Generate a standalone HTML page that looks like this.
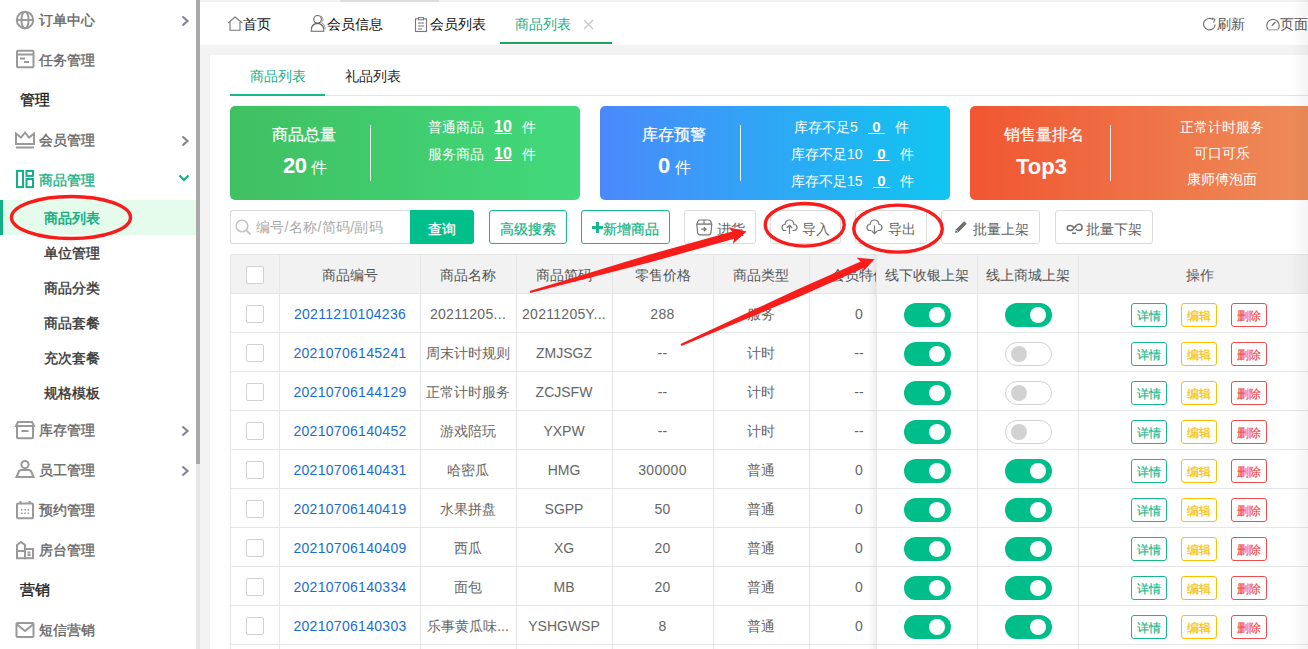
<!DOCTYPE html>
<html><head><meta charset="utf-8">
<style>
*{box-sizing:border-box;margin:0;padding:0}
html,body{width:1308px;height:649px;overflow:hidden;white-space:nowrap;background:#f3f3f3;font-family:"Liberation Sans",sans-serif;font-size:14px;color:#333}
.abs{position:absolute}
#side{position:absolute;left:0;top:0;width:196px;height:649px;background:#fff}
.mi{position:absolute;left:0;width:196px;height:40px;line-height:40px;font-size:14px;color:#666;-webkit-text-stroke:0.35px currentColor}
.mi .ic{position:absolute;left:15px;top:11px;width:20px;height:18px;overflow:visible}
.mi .tx{position:absolute;left:39px;top:0}
.mi .chev{position:absolute;left:179px;top:15px;width:12px;height:12px}
.hd{position:absolute;left:20px;height:40px;line-height:40px;font-size:15px;color:#222;-webkit-text-stroke:0.4px currentColor}
.sub{position:absolute;left:0;width:196px;height:35px;line-height:35px;font-size:14px;color:#333;-webkit-text-stroke:0.35px currentColor}
.sub .tx{position:absolute;left:44px;top:1px}
#sb{position:absolute;left:196px;top:0;width:4px;height:649px;background:#e6e6e6}
#sbt{position:absolute;left:196px;top:0;width:4px;height:464px;background:#a9a9a9}
#topbar{position:absolute;left:200px;top:2px;width:1108px;height:43px;background:#fff}
.tab{position:absolute;top:1px;height:43px;line-height:43px;font-size:14px;color:#111}
#card{position:absolute;left:210px;top:55px;width:1098px;height:600px;background:#fff}
.stat{position:absolute;top:106px;height:94px;border-radius:5px;color:#fff}
.btn{position:absolute;top:210px;height:34px;border:1px solid #dcdcdc;border-radius:3px;background:#fff;font-size:14px;color:#666;line-height:36px}
.gbtn{border-color:#17b98a;color:#12b282;-webkit-text-stroke:0.2px #12b282}
table{border-collapse:collapse}
.th{position:absolute;top:254px;height:39px;background:#f2f2f2;border-top:1px solid #e4e4e4}
.cell{position:absolute;text-align:center;font-size:14px;color:#666;line-height:39px;white-space:nowrap;overflow:hidden}
</style></head><body>

<!-- sidebar -->
<div id="side">
  <div class="mi" style="top:0">
    <svg class="ic" viewBox="0 0 20 18"><g fill="none" stroke="#999" stroke-width="2"><circle cx="10" cy="9" r="8.2"/><ellipse cx="10" cy="9" rx="3.6" ry="8.2"/><line x1="2" y1="9" x2="18" y2="9"/></g></svg>
    <span class="tx">订单中心</span>
    <svg class="chev" viewBox="0 0 12 12"><path d="M3.5 1.5 L8.5 6 L3.5 10.5" fill="none" stroke="#858596" stroke-width="2.2"/></svg>
  </div>
  <div class="mi" style="top:40px">
    <svg class="ic" viewBox="0 1 20 18"><g fill="none" stroke="#999" stroke-width="2"><rect x="2" y="0.8" width="16.5" height="16.5" rx="1"/><line x1="2" y1="4.5" x2="18.5" y2="4.5"/><line x1="5" y1="8.5" x2="10" y2="8.5"/><line x1="9" y1="12" x2="14" y2="12"/></g></svg>
    <span class="tx">任务管理</span>
  </div>
  <div class="hd" style="top:80px">管理</div>
  <div class="mi" style="top:120px">
    <svg class="ic" viewBox="0 0 20 18"><g fill="none" stroke="#999" stroke-width="2"><path d="M1 13 L1 2.5 L6 6.5 L10 1.5 L14 6.5 L19 2.5 L19 13 Z"/><line x1="1" y1="16.5" x2="19" y2="16.5"/></g></svg>
    <span class="tx">会员管理</span>
    <svg class="chev" viewBox="0 0 12 12"><path d="M3.5 1.5 L8.5 6 L3.5 10.5" fill="none" stroke="#858596" stroke-width="2.2"/></svg>
  </div>
  <div class="mi" style="top:160px;color:#13b184">
    <svg class="ic" viewBox="0 1 20 18"><g fill="none" stroke="#13b184" stroke-width="2"><rect x="2" y="0.9" width="6" height="16.2"/><rect x="11.5" y="0.9" width="6.5" height="5"/><rect x="11.5" y="9" width="6.5" height="8.1"/></g></svg>
    <span class="tx">商品管理</span>
    <svg class="chev" style="left:178px;top:12px" viewBox="0 0 12 12"><path d="M1.5 3.5 L6 8 L10.5 3.5" fill="none" stroke="#13b184" stroke-width="2.2"/></svg>
  </div>
  <div class="abs" style="left:0;top:200px;width:196px;height:35px;background:#e5fbeb"></div>
  <div class="abs" style="left:0;top:200px;width:3px;height:35px;background:#13b184"></div>
  <div class="sub" style="top:200px;color:#0caf7e;-webkit-text-stroke:0.5px #0caf7e"><span class="tx">商品列表</span></div>
  <div class="sub" style="top:235px"><span class="tx">单位管理</span></div>
  <div class="sub" style="top:270px"><span class="tx">商品分类</span></div>
  <div class="sub" style="top:305px"><span class="tx">商品套餐</span></div>
  <div class="sub" style="top:340px"><span class="tx">充次套餐</span></div>
  <div class="sub" style="top:375px"><span class="tx">规格模板</span></div>
  <div class="mi" style="top:410px">
    <svg class="ic" viewBox="0 0 20 18"><g fill="none" stroke="#999" stroke-width="2"><path d="M3 1 L17 1 L19 5 L1 5 Z"/><rect x="2" y="5" width="16" height="12.2" rx="1"/><line x1="6.5" y1="10" x2="13.5" y2="10"/></g></svg>
    <span class="tx">库存管理</span>
    <svg class="chev" viewBox="0 0 12 12"><path d="M3.5 1.5 L8.5 6 L3.5 10.5" fill="none" stroke="#858596" stroke-width="2.2"/></svg>
  </div>
  <div class="mi" style="top:450px">
    <svg class="ic" viewBox="0 1 20 18"><g fill="none" stroke="#999" stroke-width="2"><circle cx="10" cy="4.6" r="3.6"/><path d="M1.5 17 L4 11 Q5 10 7 10 L13 10 Q15 10 16 11 L18.5 17 Z"/></g></svg>
    <span class="tx">员工管理</span>
    <svg class="chev" viewBox="0 0 12 12"><path d="M3.5 1.5 L8.5 6 L3.5 10.5" fill="none" stroke="#858596" stroke-width="2.2"/></svg>
  </div>
  <div class="mi" style="top:490px">
    <svg class="ic" viewBox="0 0 20 18"><g fill="none" stroke="#999" stroke-width="2"><rect x="2" y="2.5" width="16" height="14.7" rx="1"/><line x1="5.5" y1="0" x2="5.5" y2="3"/><line x1="14.5" y1="0" x2="14.5" y2="3"/></g><g fill="#9a9a9a"><rect x="6" y="8" width="1.5" height="1.5"/><rect x="9.3" y="8" width="1.5" height="1.5"/><rect x="12.6" y="8" width="1.5" height="1.5"/><rect x="6" y="11.5" width="1.5" height="1.5"/><rect x="9.3" y="11.5" width="1.5" height="1.5"/><rect x="12.6" y="11.5" width="1.5" height="1.5"/></g></svg>
    <span class="tx">预约管理</span>
  </div>
  <div class="mi" style="top:530px">
    <svg class="ic" viewBox="0 0 20 18"><g fill="none" stroke="#999" stroke-width="2"><path d="M2 17.2 L2 4 L6 1 L10 4 L10 17.2 Z"/><rect x="10" y="8" width="8" height="9.2"/><line x1="2" y1="10" x2="10" y2="10"/><line x1="12.5" y1="11.5" x2="15.5" y2="11.5"/><line x1="12.5" y1="14" x2="15.5" y2="14"/></g></svg>
    <span class="tx">房台管理</span>
  </div>
  <div class="hd" style="top:570px">营销</div>
  <div class="mi" style="top:610px">
    <svg class="ic" viewBox="0 0 20 18"><g fill="none" stroke="#999" stroke-width="2"><rect x="1.5" y="2" width="17" height="14" rx="1"/><path d="M1.5 3 L10 10 L18.5 3"/></g></svg>
    <span class="tx">短信营销</span>
  </div>
  <!-- ellipse -->
  <svg class="abs" style="left:0;top:190px" width="150" height="56" viewBox="0 0 150 56"><ellipse cx="71" cy="27.5" rx="59.5" ry="21" fill="none" stroke="#f81c1a" stroke-width="3.4"/></svg>
</div>
<div id="sb"></div><div id="sbt"></div>

<!-- top strip / tab bar -->
<div class="abs" style="left:200px;top:0;width:1108px;height:2px;background:#f2f2f2"></div><div class="abs" style="left:340px;top:0;width:99px;height:1.5px;background:#dcdcdc;border-radius:1px"></div>
<div id="topbar">
  <div class="tab" style="left:27px">
    <svg class="abs" style="left:0;top:13px" width="17" height="16" viewBox="0 0 17 16"><path d="M1 7.2 L8 1 L15.5 7" fill="none" stroke="#777" stroke-width="1.1"/><path d="M3 6 L3 14.3 L13 14.3 L13 6" fill="none" stroke="#777" stroke-width="1.1"/></svg>
    <span class="abs" style="left:16px;top:0">首页</span>
  </div>
  <div class="tab" style="left:110px">
    <svg class="abs" style="left:0;top:11px" width="17" height="18" viewBox="0 0 17 18"><path d="M10.5 2.2 Q12.8 2.6 13 5.2 Q13 7.6 11.2 8.6 Q14.8 10 15.3 15.5" fill="none" stroke="#999" stroke-width="1"/><circle cx="7.5" cy="5.3" r="3.8" fill="#fff" stroke="#666" stroke-width="1.1"/><path d="M1.2 17.2 Q1 11 5.6 9.6 L9.4 9.6 Q14 11 13.8 17.2 Z" fill="#fff" stroke="#666" stroke-width="1.1"/></svg>
    <span class="abs" style="left:17px;top:0">会员信息</span>
  </div>
  <div class="tab" style="left:214px">
    <svg class="abs" style="left:0;top:14px" width="15" height="16" viewBox="0 0 15 16"><rect x="1.5" y="1.8" width="11" height="12.7" fill="none" stroke="#777" stroke-width="1.1"/><rect x="4.5" y="0.6" width="5" height="2.2" fill="#fff" stroke="#777" stroke-width="1"/><line x1="4" y1="6" x2="10" y2="6" stroke="#777"/><line x1="4" y1="9" x2="10" y2="9" stroke="#777"/><line x1="4" y1="12" x2="8" y2="12" stroke="#777"/></svg>
    <span class="abs" style="left:16px;top:0">会员列表</span>
  </div>
  <div class="tab" style="left:315px;color:#13b184">商品列表</div>
  <svg class="abs" style="left:383px;top:17px" width="11" height="11" viewBox="0 0 11 11"><path d="M1 1 L10 10 M10 1 L1 10" stroke="#c8c8c8" stroke-width="1.2"/></svg>
  <div class="abs" style="left:300px;top:40px;width:112px;height:2px;background:#1aa85f"></div>
  <div class="tab" style="left:1003px;color:#555">
    <svg class="abs" style="left:0;top:14px" width="14" height="14" viewBox="0 0 14 14"><path d="M12.2 7.5 A5.8 5.8 0 1 1 10 2.6" fill="none" stroke="#777" stroke-width="1.2"/><path d="M8.6 1 L11.8 2.3 L10.6 5.6" fill="none" stroke="#777" stroke-width="1.2"/></svg>
    <span class="abs" style="left:14px;top:0">刷新</span>
  </div>
  <div class="tab" style="left:1066px;color:#555">
    <svg class="abs" style="left:0;top:15px" width="14" height="13" viewBox="0 0 14 13"><path d="M2 11.3 A6.2 6.2 0 1 1 12 11.3" fill="none" stroke="#777" stroke-width="1.2"/><line x1="1.5" y1="11.8" x2="12.5" y2="11.8" stroke="#bbb" stroke-width="1.6"/><line x1="5.8" y1="7.6" x2="9.5" y2="4" stroke="#666" stroke-width="1.3"/></svg>
    <span class="abs" style="left:14px;top:0">页面</span>
  </div>
</div>

<!-- main card -->
<div id="card"></div>
<!-- subtabs -->
<div class="abs" style="left:250px;top:62px;line-height:28px;font-size:14px;color:#13b184">商品列表</div>
<div class="abs" style="left:345px;top:62px;line-height:28px;font-size:14px;color:#222">礼品列表</div>
<div class="abs" style="left:230px;top:95px;width:1078px;height:1px;background:#e4e4e4"></div>
<div class="abs" style="left:230px;top:94px;width:95px;height:2px;background:#17b98a"></div>

<!-- stat cards -->
<div class="stat" style="left:230px;width:350px;background:linear-gradient(90deg,#40c061,#41d97c)">
  <div class="abs" style="left:42px;top:16.5px;font-size:16px;line-height:24px;-webkit-text-stroke:0.2px #fff">商品总量</div>
  <div class="abs" style="left:53px;top:46px;line-height:28px;font-size:22px;font-weight:700;letter-spacing:-0.6px">20</div><div class="abs" style="left:81px;top:52px;line-height:20px;font-size:16px">件</div>
  <div class="abs" style="left:140px;top:19px;width:1px;height:56px;background:rgba(255,255,255,.9)"></div>
  <div class="abs" style="left:198px;top:11px;font-size:14px;line-height:20px">普通商品</div>
  <div class="abs" style="left:264px;top:11px;width:18px;font-size:16px;line-height:20px;font-weight:700;text-decoration:underline;text-decoration-thickness:1px;text-underline-offset:1px;text-align:center">10</div>
  <div class="abs" style="left:292px;top:11px;font-size:14px;line-height:20px">件</div>
  <div class="abs" style="left:198px;top:38px;font-size:14px;line-height:20px">服务商品</div>
  <div class="abs" style="left:264px;top:38px;width:18px;font-size:16px;line-height:20px;font-weight:700;text-decoration:underline;text-decoration-thickness:1px;text-underline-offset:1px;text-align:center">10</div>
  <div class="abs" style="left:292px;top:38px;font-size:14px;line-height:20px">件</div>
</div>
<div class="stat" style="left:600px;width:350px;background:linear-gradient(90deg,#4b89fb,#10c6ef)">
  <div class="abs" style="left:42px;top:16.5px;font-size:16px;line-height:24px;-webkit-text-stroke:0.2px #fff">库存预警</div>
  <div class="abs" style="left:58px;top:46px;line-height:28px;font-size:22px;font-weight:700">0</div><div class="abs" style="left:75px;top:52px;line-height:20px;font-size:16px">件</div>
  <div class="abs" style="left:140px;top:19px;width:1px;height:56px;background:rgba(255,255,255,.9)"></div>
  <div class="abs" style="left:194px;top:11px;font-size:14px;line-height:20px">库存不足5</div>
  <div class="abs" style="left:268px;top:11px;font-size:15px;line-height:20px;font-weight:700;text-decoration:underline;text-decoration-thickness:1px;text-underline-offset:1px;">&nbsp;0&nbsp;</div>
  <div class="abs" style="left:295px;top:11px;font-size:14px;line-height:20px">件</div>
  <div class="abs" style="left:191px;top:38px;font-size:14px;line-height:20px">库存不足10</div>
  <div class="abs" style="left:273px;top:38px;font-size:15px;line-height:20px;font-weight:700;text-decoration:underline;text-decoration-thickness:1px;text-underline-offset:1px;">&nbsp;0&nbsp;</div>
  <div class="abs" style="left:300px;top:38px;font-size:14px;line-height:20px">件</div>
  <div class="abs" style="left:191px;top:65px;font-size:14px;line-height:20px">库存不足15</div>
  <div class="abs" style="left:273px;top:65px;font-size:15px;line-height:20px;font-weight:700;text-decoration:underline;text-decoration-thickness:1px;text-underline-offset:1px;">&nbsp;0&nbsp;</div>
  <div class="abs" style="left:300px;top:65px;font-size:14px;line-height:20px">件</div>
</div>
<div class="stat" style="left:970px;width:350px;background:linear-gradient(90deg,#f05631,#ee8c59 96%)">
  <div class="abs" style="left:34px;top:16.5px;font-size:16px;line-height:24px;-webkit-text-stroke:0.2px #fff">销售量排名</div>
  <div class="abs" style="left:46px;top:47px;line-height:28px;font-size:22px;font-weight:700">Top3</div>
  <div class="abs" style="left:140px;top:19px;width:1px;height:56px;background:rgba(255,255,255,.9)"></div>
  <div class="abs" style="left:210px;top:11px;font-size:14px;line-height:20px">正常计时服务</div>
  <div class="abs" style="left:224px;top:37px;font-size:14px;line-height:20px">可口可乐</div>
  <div class="abs" style="left:217px;top:63px;font-size:14px;line-height:20px">康师傅泡面</div>
</div>

<!-- toolbar -->
<div class="abs" style="left:230px;top:210px;width:181px;height:34px;border:1px solid #dcdcdc;border-right:none;border-radius:3px 0 0 3px;background:#fff"></div>
<svg class="abs" style="left:235px;top:219px" width="17" height="17" viewBox="0 0 17 17"><circle cx="7" cy="7" r="5.8" fill="none" stroke="#c4c4c4" stroke-width="1.6"/><line x1="11.2" y1="11.2" x2="15.5" y2="15.5" stroke="#c4c4c4" stroke-width="1.8"/></svg>
<div class="abs" style="left:256px;top:209px;line-height:36px;font-size:14px;color:#aaa;letter-spacing:0.3px">编号/名称/简码/副码</div>
<div class="abs" style="left:410px;top:210px;width:64px;height:34px;background:#00bf8a;border-radius:0 3px 3px 0;color:#fff;text-align:center;line-height:38px;font-size:14px;-webkit-text-stroke:0.3px #fff">查询</div>
<div class="btn gbtn" style="left:489px;width:78px;text-align:center">高级搜索</div>
<div class="btn gbtn" style="left:581px;width:89px;padding-left:21px">新增商品<svg class="abs" style="left:10px;top:11px" width="11" height="11" viewBox="0 0 11 11"><path d="M4 0 H7 V4 H11 V7 H7 V11 H4 V7 H0 V4 H4 Z" fill="#17b98a"/></svg></div>
<div class="btn" style="left:684px;width:72px">
  <svg class="abs" style="left:11px;top:8px" width="17" height="17" viewBox="0 0 17 17"><g fill="none" stroke="#777" stroke-width="1.2"><path d="M3.5 1 L12.5 1 Q14.3 1 15 3 L15.8 5.3 L15 13.5 Q14.8 15.8 12.8 15.8 L3.8 15.8 Q1.8 15.8 1.6 13.5 L0.8 5.3 L1.6 3 Q2.2 1 3.5 1 Z"/><line x1="0.9" y1="5.1" x2="15.7" y2="5.1" stroke-width="1.4"/><line x1="8" y1="1" x2="8" y2="5"/><path d="M5.2 10.2 L9.8 10.2 M7.8 8.2 L10 10.2 L7.8 12.2"/></g></svg>
  <span class="abs" style="left:32px;top:0">进货</span>
</div>
<div class="btn" style="left:770px;width:71px">
  <svg class="abs" style="left:10px;top:7px" width="17" height="17" viewBox="0 0 17 17"><g fill="none" stroke="#777" stroke-width="1.2"><path d="M5.5 12.5 L4 12.5 Q1 12.5 1 9.5 Q1 6.5 4 6.5 Q4.5 2 8.5 2 Q12.5 2 13 6.5 Q16 6.5 16 9.5 Q16 12.5 13 12.5 L11.5 12.5"/><path d="M8.5 16 L8.5 7.5 M5.8 10 L8.5 7.3 L11.2 10"/></g></svg>
  <span class="abs" style="left:31px;top:0">导入</span>
</div>
<div class="btn" style="left:855px;width:72px">
  <svg class="abs" style="left:10px;top:7px" width="17" height="17" viewBox="0 0 17 17"><g fill="none" stroke="#777" stroke-width="1.2"><path d="M5.5 12.5 L4 12.5 Q1 12.5 1 9.5 Q1 6.5 4 6.5 Q4.5 2 8.5 2 Q12.5 2 13 6.5 Q16 6.5 16 9.5 Q16 12.5 13 12.5 L11.5 12.5"/><path d="M8.5 7.5 L8.5 15.5 M5.8 13 L8.5 15.7 L11.2 13"/></g></svg>
  <span class="abs" style="left:32px;top:0">导出</span>
</div>
<div class="btn" style="left:941px;width:99px">
  <svg class="abs" style="left:12px;top:9px" width="14" height="14" viewBox="0 0 14 14"><path d="M1 13 L1.8 9.6 L10.2 1.2 L12.8 3.8 L4.4 12.2 Z" fill="#6f6f6f"/><path d="M2.2 10 L4 11.8" stroke="#fff" stroke-width="0.7"/></svg>
  <span class="abs" style="left:31px;top:0">批量上架</span>
</div>
<div class="btn" style="left:1055px;width:98px">
  <svg class="abs" style="left:10px;top:12px" width="17" height="14" viewBox="0 0 17 14"><g fill="none" stroke="#6f6f6f" stroke-width="1.5"><path d="M8.5 5.5 Q6.5 2.5 4.2 2.5 Q1.2 2.5 1.2 5 Q1.2 7.5 4.2 7.5 Q6.5 7.5 8.5 4.5 Q10.5 1.2 13 1.2 Q16 1.2 16 4.3 Q16 7.5 13 7.5 Q11 7.5 9.6 6"/><line x1="6" y1="10.3" x2="10" y2="10.3"/></g></svg>
  <span class="abs" style="left:30px;top:0">批量下架</span>
</div>
<!-- TABLE -->
<div class="abs" style="left:230px;top:254px;width:1078px;height:39px;background:#f2f2f2"></div>
<div class="abs" style="left:230px;top:254px;width:1078px;height:1px;background:#e6e6e6"></div>
<div class="abs" style="left:230px;top:293px;width:1078px;height:1px;background:#e6e6e6"></div>
<div class="abs" style="left:230px;top:332px;width:1078px;height:1px;background:#e6e6e6"></div>
<div class="abs" style="left:230px;top:371px;width:1078px;height:1px;background:#e6e6e6"></div>
<div class="abs" style="left:230px;top:410px;width:1078px;height:1px;background:#e6e6e6"></div>
<div class="abs" style="left:230px;top:449px;width:1078px;height:1px;background:#e6e6e6"></div>
<div class="abs" style="left:230px;top:488px;width:1078px;height:1px;background:#e6e6e6"></div>
<div class="abs" style="left:230px;top:527px;width:1078px;height:1px;background:#e6e6e6"></div>
<div class="abs" style="left:230px;top:566px;width:1078px;height:1px;background:#e6e6e6"></div>
<div class="abs" style="left:230px;top:605px;width:1078px;height:1px;background:#e6e6e6"></div>
<div class="abs" style="left:230px;top:644px;width:1078px;height:1px;background:#e6e6e6"></div>
<div class="abs" style="left:230px;top:254px;width:1px;height:395px;background:#e6e6e6"></div>
<div class="abs" style="left:279px;top:254px;width:1px;height:395px;background:#e6e6e6"></div>
<div class="abs" style="left:420px;top:254px;width:1px;height:395px;background:#e6e6e6"></div>
<div class="abs" style="left:516px;top:254px;width:1px;height:395px;background:#e6e6e6"></div>
<div class="abs" style="left:612px;top:254px;width:1px;height:395px;background:#e6e6e6"></div>
<div class="abs" style="left:713px;top:254px;width:1px;height:395px;background:#e6e6e6"></div>
<div class="abs" style="left:809px;top:254px;width:1px;height:395px;background:#e6e6e6"></div>
<div class="cell" style="left:280px;top:256px;width:140px;color:#555;">商品编号</div>
<div class="cell" style="left:420px;top:256px;width:96px;color:#555;">商品名称</div>
<div class="cell" style="left:516px;top:256px;width:96px;color:#555;">商品简码</div>
<div class="cell" style="left:612px;top:256px;width:101px;color:#555;">零售价格</div>
<div class="cell" style="left:713px;top:256px;width:96px;color:#555;">商品类型</div>
<div class="cell" style="left:809px;top:256px;width:100px;color:#555;">会员特价</div>
<div class="abs" style="left:246px;top:266px;width:18px;height:18px;border:1px solid #d2d2d2;border-radius:2px;background:#fff"></div>
<div class="abs" style="left:246px;top:305px;width:18px;height:18px;border:1px solid #d2d2d2;border-radius:2px;background:#fff"></div>
<div class="cell" style="left:280px;top:295px;width:140px;color:#1a6dcf;letter-spacing:0.3px;">20211210104236</div>
<div class="cell" style="left:420px;top:295px;width:96px;color:#666;letter-spacing:0.3px;">20211205...</div>
<div class="cell" style="left:516px;top:295px;width:96px;color:#666;letter-spacing:0.3px;">20211205Y...</div>
<div class="cell" style="left:612px;top:295px;width:101px;color:#666;letter-spacing:0.3px;">288</div>
<div class="cell" style="left:713px;top:295px;width:96px;color:#666;">服务</div>
<div class="cell" style="left:809px;top:295px;width:100px;color:#666;letter-spacing:0.3px;">0</div>
<div class="abs" style="left:246px;top:344px;width:18px;height:18px;border:1px solid #d2d2d2;border-radius:2px;background:#fff"></div>
<div class="cell" style="left:280px;top:334px;width:140px;color:#1a6dcf;letter-spacing:0.3px;">20210706145241</div>
<div class="cell" style="left:420px;top:334px;width:96px;color:#666;">周末计时规则</div>
<div class="cell" style="left:516px;top:334px;width:96px;color:#666;">ZMJSGZ</div>
<div class="cell" style="left:612px;top:334px;width:101px;color:#666;">--</div>
<div class="cell" style="left:713px;top:334px;width:96px;color:#666;">计时</div>
<div class="cell" style="left:809px;top:334px;width:100px;color:#666;">--</div>
<div class="abs" style="left:246px;top:383px;width:18px;height:18px;border:1px solid #d2d2d2;border-radius:2px;background:#fff"></div>
<div class="cell" style="left:280px;top:373px;width:140px;color:#1a6dcf;letter-spacing:0.3px;">20210706144129</div>
<div class="cell" style="left:420px;top:373px;width:96px;color:#666;">正常计时服务</div>
<div class="cell" style="left:516px;top:373px;width:96px;color:#666;">ZCJSFW</div>
<div class="cell" style="left:612px;top:373px;width:101px;color:#666;">--</div>
<div class="cell" style="left:713px;top:373px;width:96px;color:#666;">计时</div>
<div class="cell" style="left:809px;top:373px;width:100px;color:#666;">--</div>
<div class="abs" style="left:246px;top:422px;width:18px;height:18px;border:1px solid #d2d2d2;border-radius:2px;background:#fff"></div>
<div class="cell" style="left:280px;top:412px;width:140px;color:#1a6dcf;letter-spacing:0.3px;">20210706140452</div>
<div class="cell" style="left:420px;top:412px;width:96px;color:#666;">游戏陪玩</div>
<div class="cell" style="left:516px;top:412px;width:96px;color:#666;">YXPW</div>
<div class="cell" style="left:612px;top:412px;width:101px;color:#666;">--</div>
<div class="cell" style="left:713px;top:412px;width:96px;color:#666;">计时</div>
<div class="cell" style="left:809px;top:412px;width:100px;color:#666;">--</div>
<div class="abs" style="left:246px;top:461px;width:18px;height:18px;border:1px solid #d2d2d2;border-radius:2px;background:#fff"></div>
<div class="cell" style="left:280px;top:451px;width:140px;color:#1a6dcf;letter-spacing:0.3px;">20210706140431</div>
<div class="cell" style="left:420px;top:451px;width:96px;color:#666;">哈密瓜</div>
<div class="cell" style="left:516px;top:451px;width:96px;color:#666;">HMG</div>
<div class="cell" style="left:612px;top:451px;width:101px;color:#666;letter-spacing:0.3px;">300000</div>
<div class="cell" style="left:713px;top:451px;width:96px;color:#666;">普通</div>
<div class="cell" style="left:809px;top:451px;width:100px;color:#666;letter-spacing:0.3px;">0</div>
<div class="abs" style="left:246px;top:500px;width:18px;height:18px;border:1px solid #d2d2d2;border-radius:2px;background:#fff"></div>
<div class="cell" style="left:280px;top:490px;width:140px;color:#1a6dcf;letter-spacing:0.3px;">20210706140419</div>
<div class="cell" style="left:420px;top:490px;width:96px;color:#666;">水果拼盘</div>
<div class="cell" style="left:516px;top:490px;width:96px;color:#666;">SGPP</div>
<div class="cell" style="left:612px;top:490px;width:101px;color:#666;letter-spacing:0.3px;">50</div>
<div class="cell" style="left:713px;top:490px;width:96px;color:#666;">普通</div>
<div class="cell" style="left:809px;top:490px;width:100px;color:#666;letter-spacing:0.3px;">0</div>
<div class="abs" style="left:246px;top:539px;width:18px;height:18px;border:1px solid #d2d2d2;border-radius:2px;background:#fff"></div>
<div class="cell" style="left:280px;top:529px;width:140px;color:#1a6dcf;letter-spacing:0.3px;">20210706140409</div>
<div class="cell" style="left:420px;top:529px;width:96px;color:#666;">西瓜</div>
<div class="cell" style="left:516px;top:529px;width:96px;color:#666;">XG</div>
<div class="cell" style="left:612px;top:529px;width:101px;color:#666;letter-spacing:0.3px;">20</div>
<div class="cell" style="left:713px;top:529px;width:96px;color:#666;">普通</div>
<div class="cell" style="left:809px;top:529px;width:100px;color:#666;letter-spacing:0.3px;">0</div>
<div class="abs" style="left:246px;top:578px;width:18px;height:18px;border:1px solid #d2d2d2;border-radius:2px;background:#fff"></div>
<div class="cell" style="left:280px;top:568px;width:140px;color:#1a6dcf;letter-spacing:0.3px;">20210706140334</div>
<div class="cell" style="left:420px;top:568px;width:96px;color:#666;">面包</div>
<div class="cell" style="left:516px;top:568px;width:96px;color:#666;">MB</div>
<div class="cell" style="left:612px;top:568px;width:101px;color:#666;letter-spacing:0.3px;">20</div>
<div class="cell" style="left:713px;top:568px;width:96px;color:#666;">普通</div>
<div class="cell" style="left:809px;top:568px;width:100px;color:#666;letter-spacing:0.3px;">0</div>
<div class="abs" style="left:246px;top:617px;width:18px;height:18px;border:1px solid #d2d2d2;border-radius:2px;background:#fff"></div>
<div class="cell" style="left:280px;top:607px;width:140px;color:#1a6dcf;letter-spacing:0.3px;">20210706140303</div>
<div class="cell" style="left:420px;top:607px;width:96px;color:#666;">乐事黄瓜味...</div>
<div class="cell" style="left:516px;top:607px;width:96px;color:#666;">YSHGWSP</div>
<div class="cell" style="left:612px;top:607px;width:101px;color:#666;letter-spacing:0.3px;">8</div>
<div class="cell" style="left:713px;top:607px;width:96px;color:#666;">普通</div>
<div class="cell" style="left:809px;top:607px;width:100px;color:#666;letter-spacing:0.3px;">0</div>
<div class="abs" style="left:868px;top:254px;width:8px;height:395px;background:linear-gradient(90deg,rgba(0,0,0,0),rgba(0,0,0,.06))"></div>
<div class="abs" style="left:876px;top:254px;width:432px;height:395px;background:#fff"></div>
<div class="abs" style="left:876px;top:254px;width:432px;height:39px;background:#f2f2f2"></div>
<div class="abs" style="left:876px;top:254px;width:432px;height:1px;background:#e6e6e6"></div>
<div class="abs" style="left:876px;top:293px;width:432px;height:1px;background:#e6e6e6"></div>
<div class="abs" style="left:876px;top:332px;width:432px;height:1px;background:#e6e6e6"></div>
<div class="abs" style="left:876px;top:371px;width:432px;height:1px;background:#e6e6e6"></div>
<div class="abs" style="left:876px;top:410px;width:432px;height:1px;background:#e6e6e6"></div>
<div class="abs" style="left:876px;top:449px;width:432px;height:1px;background:#e6e6e6"></div>
<div class="abs" style="left:876px;top:488px;width:432px;height:1px;background:#e6e6e6"></div>
<div class="abs" style="left:876px;top:527px;width:432px;height:1px;background:#e6e6e6"></div>
<div class="abs" style="left:876px;top:566px;width:432px;height:1px;background:#e6e6e6"></div>
<div class="abs" style="left:876px;top:605px;width:432px;height:1px;background:#e6e6e6"></div>
<div class="abs" style="left:876px;top:644px;width:432px;height:1px;background:#e6e6e6"></div>
<div class="abs" style="left:876px;top:254px;width:1px;height:395px;background:#e6e6e6"></div>
<div class="abs" style="left:977px;top:254px;width:1px;height:395px;background:#e6e6e6"></div>
<div class="abs" style="left:1078px;top:254px;width:1px;height:395px;background:#e6e6e6"></div>
<div class="cell" style="left:877px;top:256px;width:100px;color:#555;">线下收银上架</div>
<div class="cell" style="left:978px;top:256px;width:100px;color:#555;">线上商城上架</div>
<div class="cell" style="left:1079px;top:256px;width:241px;color:#555;">操作</div>
<div class="abs" style="left:904px;top:303px;width:47px;height:24px;border-radius:12px;background:#00be8a"></div><div class="abs" style="left:929px;top:307px;width:16px;height:16px;border-radius:50%;background:#fff"></div>
<div class="abs" style="left:1005px;top:303px;width:47px;height:24px;border-radius:12px;background:#00be8a"></div><div class="abs" style="left:1030px;top:307px;width:16px;height:16px;border-radius:50%;background:#fff"></div>
<div class="abs" style="left:1131px;top:303px;width:36px;height:24px;border:1px solid #17b98a;border-radius:3px;color:#17b98a;font-size:12px;line-height:24px;text-align:center;-webkit-text-stroke:0.2px #17b98a">详情</div>
<div class="abs" style="left:1181px;top:303px;width:36px;height:24px;border:1px solid #f7c200;border-radius:3px;color:#f7c200;font-size:12px;line-height:24px;text-align:center;-webkit-text-stroke:0.2px #f7c200">编辑</div>
<div class="abs" style="left:1231px;top:303px;width:36px;height:24px;border:1px solid #f04c4c;border-radius:3px;color:#f04c4c;font-size:12px;line-height:24px;text-align:center;-webkit-text-stroke:0.2px #f04c4c">删除</div>
<div class="abs" style="left:904px;top:342px;width:47px;height:24px;border-radius:12px;background:#00be8a"></div><div class="abs" style="left:929px;top:346px;width:16px;height:16px;border-radius:50%;background:#fff"></div>
<div class="abs" style="left:1005px;top:342px;width:47px;height:24px;border-radius:12px;background:#fff;border:1px solid #d2d2d2"></div><div class="abs" style="left:1011px;top:346px;width:16px;height:16px;border-radius:50%;background:#d2d2d2"></div>
<div class="abs" style="left:1131px;top:342px;width:36px;height:24px;border:1px solid #17b98a;border-radius:3px;color:#17b98a;font-size:12px;line-height:24px;text-align:center;-webkit-text-stroke:0.2px #17b98a">详情</div>
<div class="abs" style="left:1181px;top:342px;width:36px;height:24px;border:1px solid #f7c200;border-radius:3px;color:#f7c200;font-size:12px;line-height:24px;text-align:center;-webkit-text-stroke:0.2px #f7c200">编辑</div>
<div class="abs" style="left:1231px;top:342px;width:36px;height:24px;border:1px solid #f04c4c;border-radius:3px;color:#f04c4c;font-size:12px;line-height:24px;text-align:center;-webkit-text-stroke:0.2px #f04c4c">删除</div>
<div class="abs" style="left:904px;top:381px;width:47px;height:24px;border-radius:12px;background:#00be8a"></div><div class="abs" style="left:929px;top:385px;width:16px;height:16px;border-radius:50%;background:#fff"></div>
<div class="abs" style="left:1005px;top:381px;width:47px;height:24px;border-radius:12px;background:#fff;border:1px solid #d2d2d2"></div><div class="abs" style="left:1011px;top:385px;width:16px;height:16px;border-radius:50%;background:#d2d2d2"></div>
<div class="abs" style="left:1131px;top:381px;width:36px;height:24px;border:1px solid #17b98a;border-radius:3px;color:#17b98a;font-size:12px;line-height:24px;text-align:center;-webkit-text-stroke:0.2px #17b98a">详情</div>
<div class="abs" style="left:1181px;top:381px;width:36px;height:24px;border:1px solid #f7c200;border-radius:3px;color:#f7c200;font-size:12px;line-height:24px;text-align:center;-webkit-text-stroke:0.2px #f7c200">编辑</div>
<div class="abs" style="left:1231px;top:381px;width:36px;height:24px;border:1px solid #f04c4c;border-radius:3px;color:#f04c4c;font-size:12px;line-height:24px;text-align:center;-webkit-text-stroke:0.2px #f04c4c">删除</div>
<div class="abs" style="left:904px;top:420px;width:47px;height:24px;border-radius:12px;background:#00be8a"></div><div class="abs" style="left:929px;top:424px;width:16px;height:16px;border-radius:50%;background:#fff"></div>
<div class="abs" style="left:1005px;top:420px;width:47px;height:24px;border-radius:12px;background:#fff;border:1px solid #d2d2d2"></div><div class="abs" style="left:1011px;top:424px;width:16px;height:16px;border-radius:50%;background:#d2d2d2"></div>
<div class="abs" style="left:1131px;top:420px;width:36px;height:24px;border:1px solid #17b98a;border-radius:3px;color:#17b98a;font-size:12px;line-height:24px;text-align:center;-webkit-text-stroke:0.2px #17b98a">详情</div>
<div class="abs" style="left:1181px;top:420px;width:36px;height:24px;border:1px solid #f7c200;border-radius:3px;color:#f7c200;font-size:12px;line-height:24px;text-align:center;-webkit-text-stroke:0.2px #f7c200">编辑</div>
<div class="abs" style="left:1231px;top:420px;width:36px;height:24px;border:1px solid #f04c4c;border-radius:3px;color:#f04c4c;font-size:12px;line-height:24px;text-align:center;-webkit-text-stroke:0.2px #f04c4c">删除</div>
<div class="abs" style="left:904px;top:459px;width:47px;height:24px;border-radius:12px;background:#00be8a"></div><div class="abs" style="left:929px;top:463px;width:16px;height:16px;border-radius:50%;background:#fff"></div>
<div class="abs" style="left:1005px;top:459px;width:47px;height:24px;border-radius:12px;background:#00be8a"></div><div class="abs" style="left:1030px;top:463px;width:16px;height:16px;border-radius:50%;background:#fff"></div>
<div class="abs" style="left:1131px;top:459px;width:36px;height:24px;border:1px solid #17b98a;border-radius:3px;color:#17b98a;font-size:12px;line-height:24px;text-align:center;-webkit-text-stroke:0.2px #17b98a">详情</div>
<div class="abs" style="left:1181px;top:459px;width:36px;height:24px;border:1px solid #f7c200;border-radius:3px;color:#f7c200;font-size:12px;line-height:24px;text-align:center;-webkit-text-stroke:0.2px #f7c200">编辑</div>
<div class="abs" style="left:1231px;top:459px;width:36px;height:24px;border:1px solid #f04c4c;border-radius:3px;color:#f04c4c;font-size:12px;line-height:24px;text-align:center;-webkit-text-stroke:0.2px #f04c4c">删除</div>
<div class="abs" style="left:904px;top:498px;width:47px;height:24px;border-radius:12px;background:#00be8a"></div><div class="abs" style="left:929px;top:502px;width:16px;height:16px;border-radius:50%;background:#fff"></div>
<div class="abs" style="left:1005px;top:498px;width:47px;height:24px;border-radius:12px;background:#00be8a"></div><div class="abs" style="left:1030px;top:502px;width:16px;height:16px;border-radius:50%;background:#fff"></div>
<div class="abs" style="left:1131px;top:498px;width:36px;height:24px;border:1px solid #17b98a;border-radius:3px;color:#17b98a;font-size:12px;line-height:24px;text-align:center;-webkit-text-stroke:0.2px #17b98a">详情</div>
<div class="abs" style="left:1181px;top:498px;width:36px;height:24px;border:1px solid #f7c200;border-radius:3px;color:#f7c200;font-size:12px;line-height:24px;text-align:center;-webkit-text-stroke:0.2px #f7c200">编辑</div>
<div class="abs" style="left:1231px;top:498px;width:36px;height:24px;border:1px solid #f04c4c;border-radius:3px;color:#f04c4c;font-size:12px;line-height:24px;text-align:center;-webkit-text-stroke:0.2px #f04c4c">删除</div>
<div class="abs" style="left:904px;top:537px;width:47px;height:24px;border-radius:12px;background:#00be8a"></div><div class="abs" style="left:929px;top:541px;width:16px;height:16px;border-radius:50%;background:#fff"></div>
<div class="abs" style="left:1005px;top:537px;width:47px;height:24px;border-radius:12px;background:#00be8a"></div><div class="abs" style="left:1030px;top:541px;width:16px;height:16px;border-radius:50%;background:#fff"></div>
<div class="abs" style="left:1131px;top:537px;width:36px;height:24px;border:1px solid #17b98a;border-radius:3px;color:#17b98a;font-size:12px;line-height:24px;text-align:center;-webkit-text-stroke:0.2px #17b98a">详情</div>
<div class="abs" style="left:1181px;top:537px;width:36px;height:24px;border:1px solid #f7c200;border-radius:3px;color:#f7c200;font-size:12px;line-height:24px;text-align:center;-webkit-text-stroke:0.2px #f7c200">编辑</div>
<div class="abs" style="left:1231px;top:537px;width:36px;height:24px;border:1px solid #f04c4c;border-radius:3px;color:#f04c4c;font-size:12px;line-height:24px;text-align:center;-webkit-text-stroke:0.2px #f04c4c">删除</div>
<div class="abs" style="left:904px;top:576px;width:47px;height:24px;border-radius:12px;background:#00be8a"></div><div class="abs" style="left:929px;top:580px;width:16px;height:16px;border-radius:50%;background:#fff"></div>
<div class="abs" style="left:1005px;top:576px;width:47px;height:24px;border-radius:12px;background:#00be8a"></div><div class="abs" style="left:1030px;top:580px;width:16px;height:16px;border-radius:50%;background:#fff"></div>
<div class="abs" style="left:1131px;top:576px;width:36px;height:24px;border:1px solid #17b98a;border-radius:3px;color:#17b98a;font-size:12px;line-height:24px;text-align:center;-webkit-text-stroke:0.2px #17b98a">详情</div>
<div class="abs" style="left:1181px;top:576px;width:36px;height:24px;border:1px solid #f7c200;border-radius:3px;color:#f7c200;font-size:12px;line-height:24px;text-align:center;-webkit-text-stroke:0.2px #f7c200">编辑</div>
<div class="abs" style="left:1231px;top:576px;width:36px;height:24px;border:1px solid #f04c4c;border-radius:3px;color:#f04c4c;font-size:12px;line-height:24px;text-align:center;-webkit-text-stroke:0.2px #f04c4c">删除</div>
<div class="abs" style="left:904px;top:615px;width:47px;height:24px;border-radius:12px;background:#00be8a"></div><div class="abs" style="left:929px;top:619px;width:16px;height:16px;border-radius:50%;background:#fff"></div>
<div class="abs" style="left:1005px;top:615px;width:47px;height:24px;border-radius:12px;background:#00be8a"></div><div class="abs" style="left:1030px;top:619px;width:16px;height:16px;border-radius:50%;background:#fff"></div>
<div class="abs" style="left:1131px;top:615px;width:36px;height:24px;border:1px solid #17b98a;border-radius:3px;color:#17b98a;font-size:12px;line-height:24px;text-align:center;-webkit-text-stroke:0.2px #17b98a">详情</div>
<div class="abs" style="left:1181px;top:615px;width:36px;height:24px;border:1px solid #f7c200;border-radius:3px;color:#f7c200;font-size:12px;line-height:24px;text-align:center;-webkit-text-stroke:0.2px #f7c200">编辑</div>
<div class="abs" style="left:1231px;top:615px;width:36px;height:24px;border:1px solid #f04c4c;border-radius:3px;color:#f04c4c;font-size:12px;line-height:24px;text-align:center;-webkit-text-stroke:0.2px #f04c4c">删除</div>
<!-- /TABLE -->


<div class="abs" style="left:1290px;top:0;width:18px;height:649px;background:linear-gradient(90deg,rgba(0,0,0,0),rgba(0,0,0,.045))"></div>
<!-- ANNOT --><svg class="abs" style="left:0;top:0" width="1308" height="649" viewBox="0 0 1308 649">
<ellipse cx="804.7" cy="224.8" rx="39.5" ry="21.3" fill="none" stroke="#f81c1a" stroke-width="3.4"/>
<ellipse cx="898" cy="228.6" rx="44.3" ry="23.5" fill="none" stroke="#f81c1a" stroke-width="3.4"/>
<path d="M529.7 290.9 L648.1 255.1 L732.2 231.6 L728.6 227.3 L746.5 231.5 L732.8 243.9 L734.2 238.8 L650.1 262.3 L530.3 293.1 Z" fill="#f81c1a"/>
<path d="M680.5 343.9 L795.6 290.2 L860.7 261.4 L856.6 257.7 L874.5 259.3 L862.4 272.3 L863.6 268.1 L798.6 296.9 L681.5 346.1 Z" fill="#f81c1a"/>
</svg><!-- /ANNOT -->
</body></html>
